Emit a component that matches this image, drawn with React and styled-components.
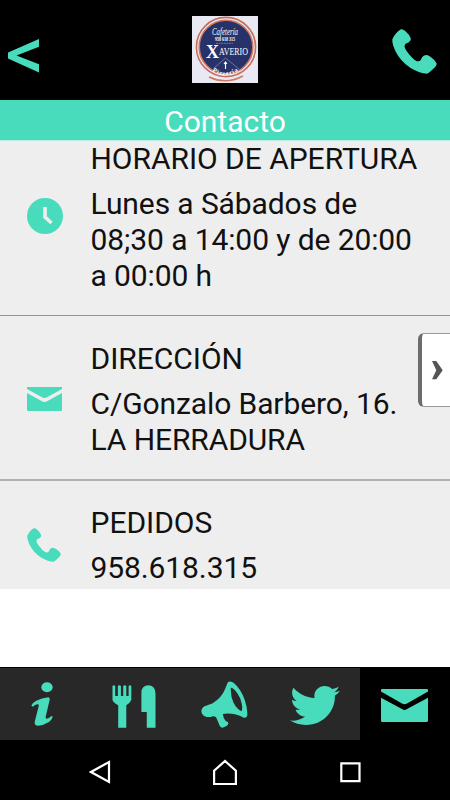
import styled, { createGlobalStyle } from 'styled-components'
import { FaTwitter } from 'react-icons/fa'

const contactInfo = [
    {
        id: 1,
        icon: 'clock',
        title: 'HORARIO DE APERTURA',
        lines: ['Lunes a Sábados de', '08;30 a 14:00 y de 20:00', 'a 00:00 h'],
    },
    { id: 2, icon: 'mail', title: 'DIRECCIÓN', lines: ['C/Gonzalo Barbero, 16.', 'LA HERRADURA'] },
    { id: 3, icon: 'phone', title: 'PEDIDOS', lines: ['958.618.315'] },
]

const tabs = ['info', 'food', 'news', 'twitter', 'contact']

export default function App(){
    return(
    <Screen>
        <GlobalStyle />

        <Header>
            <BackButton aria-label='Volver'>
                <svg width='31' height='34' viewBox='0 0 31 34'>
                    <path d='M31 0V7.7L8.5 16.5L31 25.3V33.5L0 19.6V13.4Z'/>
                </svg>
            </BackButton>
            <Logo />
            <PhoneIcon size={45}/>
        </Header>

        <Banner>Contacto</Banner>

        <Content>
            {contactInfo.map((info)=>
                <InfoRow key={info.id} $first={info.id===1} $last={info.id===contactInfo.length}>
                    <IconSlot $icon={info.icon}><InfoIcon name={info.icon}/></IconSlot>
                    <InfoText>
                        <h2>{info.title}</h2>
                        {info.lines.map((line)=> <p key={line}>{line}</p>)}
                    </InfoText>
                </InfoRow>
            )}
        </Content>

        <Drawer aria-label='Abrir'>
            <svg width='11' height='19' viewBox='0 0 11 19'>
                <path d='M0 0H4.3L10.7 9.2L4.3 18.3H0L4.3 9.2Z'/>
            </svg>
        </Drawer>

        <TabBar>
            {tabs.map((tab)=>
                <Tab key={tab} $name={tab} $active={tab==='contact'}><TabIcon name={tab}/></Tab>
            )}
        </TabBar>

        <SystemBar>
            <svg width='22' height='24' viewBox='0 0 22 24'><path d='M20 2V22L2 12Z'/></svg>
            <svg width='26' height='27' viewBox='0 0 26 27'><path d='M1.1 25V11.8L12 2L22.9 11.8V25Z'/></svg>
            <svg width='21' height='21' viewBox='0 0 21 21'><path d='M1.3 1.3H19.5V19.2H1.3Z'/></svg>
        </SystemBar>
    </Screen>
    )
}

function PhoneIcon({size}){
    return(
        <svg width={size} height={size} viewBox='66 56 136 136'>
            <path d='M93 57Q99 56 106 62Q119 73 123 85Q124 91 116 97Q106 99 104 106Q103 114 114 128Q127 145 137 151Q147 157 153 150Q157 137 166 135Q174 133 184 141Q197 150 201 160Q202 166 191 176Q179 188 172 191Q151 191 122 174Q91 153 77 124Q66 102 67 87Q77 66 93 57Z'/>
        </svg>
    )
}

function InfoIcon({name}){
    if(name==='clock'){
        return(
            <svg width='36' height='36' viewBox='0 0 36 36'>
                <circle cx='18' cy='18' r='18'/>
                <path d='M18 9V19L24.5 25' fill='none' stroke='#eee' strokeWidth='3.7'/>
            </svg>
        )
    }
    if(name==='mail'){
        return(
            <svg width='35' height='24' viewBox='0 0 35 24'>
                <path d='M0 0H35V2L20 10.2Q17.5 11.6 15 10.2L0 2Z'/>
                <path d='M0 6L14.5 14Q17.5 16.2 20.5 14L35 6V23Q35 24 34 24H1Q0 24 0 23Z'/>
            </svg>
        )
    }
    return <PhoneIcon size={34}/>
}

function TabIcon({name}){
    switch(name){
        case 'info':
            return(
                <svg width='22' height='44' viewBox='92 65 66 132'>
                    <ellipse cx='140' cy='81' rx='17' ry='15'/>
                    <path d='M93 136Q97 126 108 121Q124 113 144 111Q149 112 148 118L136 169Q135 175 140 175Q148 174 152 168H157Q157 177 147 184Q130 195 113 196Q102 196 103 185L115 138Q117 131 111 132Q103 133 98 139Z'/>
                </svg>
            )
        case 'food':
            return(
                <svg width='44' height='43' viewBox='336 74 130 128'>
                    <path d='M337 77Q341 72 345 77V107H353V77Q357 72 362 77V107H369V77Q373 72 378 77V107H385V77Q389 72 393 77V119Q390 127 378 134V201H354V134Q340 128 337 119Z'/>
                    <path d='M423 154V98Q423 75 445 75Q465 77 465 100V201H439V154Z'/>
                </svg>
            )
        case 'news':
            return(
                <svg width='47' height='47' viewBox='32 32 140 140'>
                    <path fillRule='evenodd' d='M112 36Q119 30 130 38Q151 56 162 88Q171 113 170 134Q168 144 158 141Q132 126 97 130L100 143Q104 152 112 154Q116 162 108 166L96 171Q90 171 88 166L77 140Q70 135 61 139H49Q35 136 33 123Q34 111 43 107L67 98Q94 82 105 53ZM121 51Q119 75 129 97Q138 115 152 122Q159 113 149 84Q136 56 121 51Z'/>
                </svg>
            )
        case 'twitter':
            return <TwitterIcon viewBox='0 48 512 416' preserveAspectRatio='none'/>
        default:
            return(
                <svg width='47' height='33' viewBox='0 0 47 33'>
                    <path d='M0 1Q0 0 1 0H46Q47 0 47 1V2.6L26 14.4Q23.5 16 21 14.4L0 2.6Z'/>
                    <path d='M0 8.7L21 20Q23.5 21.8 26 20L47 8.7V31.5Q47 33 45.5 33H1.5Q0 33 0 31.5Z'/>
                </svg>
            )
    }
}

function Logo(){
    return(
        <LogoBox width='66' height='67' viewBox='0 0 66 67'>
            <defs>
                <path id='ring' d='M13 48Q33.5 72 56 46'/>
            </defs>
            <rect width='66' height='67' fill='#e8e9f2'/>
            <circle cx='34' cy='31' r='29.6' fill='none' stroke='#c5705c' strokeWidth='1.6'/>
            <circle cx='34' cy='31' r='26.8' fill='#263269' stroke='#cf765d' strokeWidth='1.6'/>
            <path d='M21 53L33.5 42L47 53' fill='none' stroke='#9aa2c5' strokeWidth='.6'/>
            <path d='M33.5 46V53M32 48L33.5 46L35 48' fill='none' stroke='#fff' strokeWidth='1.1'/>
            <text x='20' y='18.5' className='script' textLength='26' lengthAdjust='spacingAndGlyphs'>Cafetería</text>
            <text x='23' y='24.9' className='small' textLength='20' lengthAdjust='spacingAndGlyphs'>958 618 315</text>
            <path d='M24 27.3H41' stroke='#8c95bc' strokeWidth='.7' strokeDasharray='2 .6'/>
            <text x='14' y='41.5' className='initial'>X</text>
            <text x='27' y='39' className='name' textLength='29' lengthAdjust='spacingAndGlyphs'>AVERIO</text>
            <text className='pizza'><textPath href='#ring' startOffset='10'>Pizzería</textPath></text>
            <path d='M17 61Q34 69 51 60' fill='none' stroke='#cf7a62' strokeWidth='1.5'/>
        </LogoBox>
    )
}

const GlobalStyle = createGlobalStyle`
    *{
        box-sizing: border-box;
    }
    body{
        margin: 0;
        background-color: #fff;
        font-family: Roboto, sans-serif;
    }
    svg{
        display: block;
    }
`

const Screen = styled.div`
    width: 450px;
    height: 800px;
    position: relative;
    display: flex;
    flex-direction: column;
    overflow: hidden;
    background-color: #fff;
    fill: #48dbbc;
`

const Header = styled.header`
    height: 100px;
    display: flex;
    align-items: center;
    justify-content: space-between;
    padding: 3px 13px 0 8px;
    background-color: #000;
`

const BackButton = styled.button`
    width: 45px;
    padding: 9px 0 0;
    border: none;
    background: none;
    fill: inherit;
`

const LogoBox = styled.svg`
    margin: 0 0 4px 4px;
    text{
        fill: #fff;
        font-family: 'Liberation Serif', serif;
    }
    .script{
        font-size: 10px;
        font-style: italic;
    }
    .small{
        font-size: 5.5px;
        font-weight: bold;
    }
    .initial{
        font-size: 18px;
        font-weight: bold;
    }
    .name{
        font-size: 9.5px;
    }
    .pizza{
        font-size: 6.5px;
        font-weight: bold;
        letter-spacing: .8px;
    }
`

const Banner = styled.h1`
    height: 41px;
    margin: 0;
    background-color: #48dbbc;
    border-bottom: 1px solid #bce9df;
    color: #fff;
    font-size: 30px;
    font-weight: 400;
    line-height: 43px;
    text-align: center;
`

const Content = styled.main`
    height: 526px;
`

const InfoRow = styled.section`
    display: flex;
    align-items: center;
    padding: ${(props)=> props.$first ? '0' : '25px'} 0 ${(props)=> props.$last ? '3px' : '21px'};
    border-bottom: ${(props)=> props.$last ? 'none' : props.$first ? '1px solid #949494' : '2px solid #b0b0b0'};
    background-color: #eee;
    &:last-child{
        padding-top: 24px;
    }
`

const iconLift = {
    clock: '4px',
    mail: '2px',
    phone: '1px',
}

const IconSlot = styled.div`
    width: 90.5px;
    padding-left: 27px;
    padding-bottom: ${(props)=> iconLift[props.$icon]};
`

const InfoText = styled.div`
    color: #111;
    font-size: 30px;
    line-height: 36px;
    letter-spacing: -0.1px;
    white-space: nowrap;
    h2{
        margin: 0 0 9px;
        font-size: inherit;
        font-weight: 400;
        letter-spacing: -0.03px;
    }
    p{
        margin: 0;
    }
`

const Drawer = styled.button`
    position: absolute;
    top: 333px;
    right: 0;
    width: 32px;
    height: 74px;
    padding: 0 0 0 10px;
    border: 1px solid #999;
    border-left: 4px solid #6c6c6c;
    border-right: none;
    border-radius: 6px 0 0 6px;
    background-color: #fff;
    fill: #555;
`

const TabBar = styled.nav`
    height: 73px;
    display: flex;
    border-top: 1px solid #000;
    background-color: #282828;
`

// the glyphs are not optically centred, each one needs its own nudge
const tabPadding = {
    info: '0 6px 0 0',
    food: '4px 3px 0 0',
    news: '0 1px 0 0',
    twitter: '3px 0 0 0',
    contact: '3px 1px 0 0',
}

const Tab = styled.div`
    width: 90px;
    display: flex;
    align-items: center;
    justify-content: center;
    padding: ${(props)=> tabPadding[props.$name]};
    background-color: ${(props)=> props.$active ? '#000' : 'transparent'};
    svg{
        fill: #48dbbc;
    }
`

const TwitterIcon = styled(FaTwitter)`
    width: 50px;
    height: 39px;
`

const SystemBar = styled.footer`
    height: 60px;
    display: flex;
    align-items: center;
    justify-content: space-between;
    padding: 4px 89px 0;
    background-color: #000;
    svg{
        fill: none;
        stroke: #fff;
        stroke-width: 2.2;
    }
`
